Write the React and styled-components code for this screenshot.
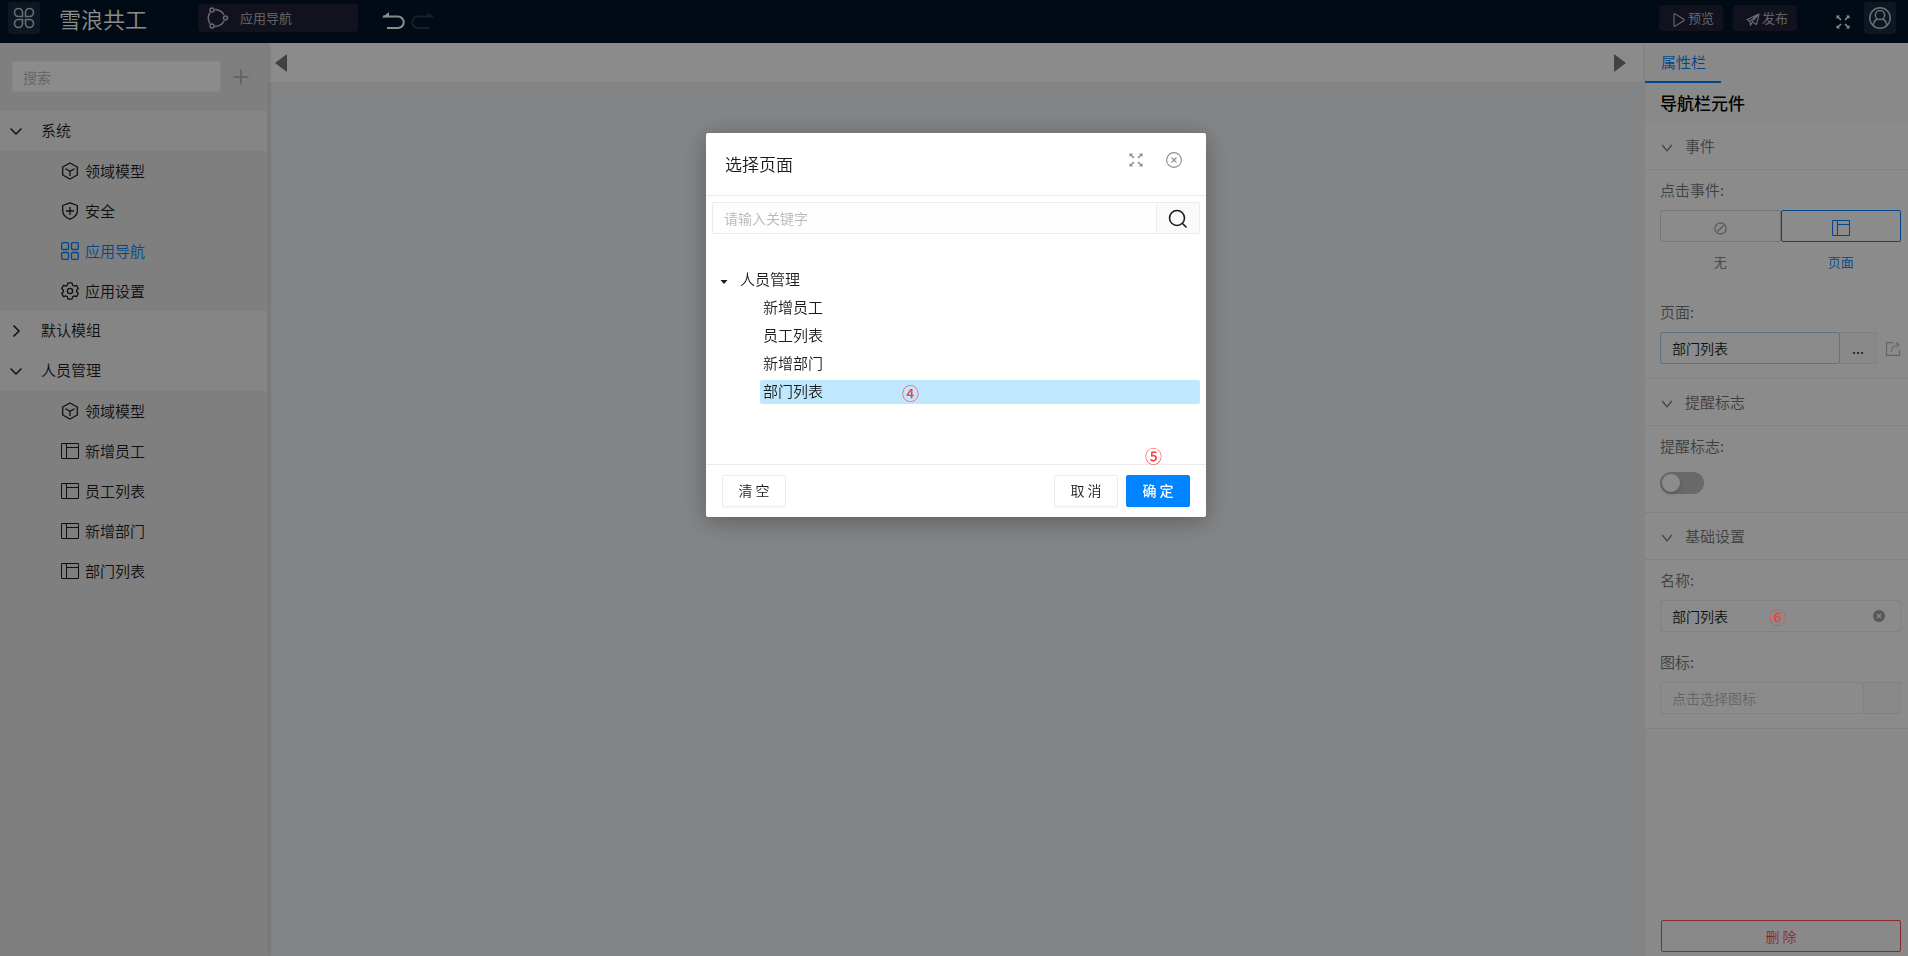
import React, { useState } from 'react';
import styled, { createGlobalStyle, css } from 'styled-components';

const GlobalStyle = createGlobalStyle`
    * {
        box-sizing: border-box;
    }
    body {
        margin: 0;
        font-family: "Noto Sans CJK SC", "Noto Sans", sans-serif;
        font-weight: 350;
        font-size: 15px;
        line-height: 22px;
        color: #1c1c1c;
    }
    button, input {
        font: inherit;
        color: inherit;
        margin: 0;
    }
    button {
        padding: 0;
        border: none;
        background: none;
        cursor: pointer;
    }
`;

const Page = styled.div`
    display: flex;
    flex-direction: column;
    min-height: 100vh;
`;

const TopBar = styled.header`
    display: flex;
    align-items: flex-start;
    height: 43px;
    padding: 0 12px 0 8px;
    background: #001529;
    color: #fff;
`;

const SquareButton = styled.button`
    display: flex;
    align-items: center;
    justify-content: center;
    width: 32px;
    height: 32px;
    margin-top: 2px;
    border-radius: 4px;
    background: #172b3e;
    color: #c4c8cd;
`;

const Brand = styled.h1`
    margin: 3px 0 0 19px;
    width: 139px;
    font-size: 22px;
    font-weight: 350;
    line-height: 30px;
`;

const NavPill = styled.button`
    display: flex;
    align-items: center;
    gap: 11px;
    width: 160px;
    height: 28px;
    margin-top: 4px;
    padding-left: 9px;
    border-radius: 4px;
    background: #212238;
    color: #c0c3c8;
    font-size: 13px;
`;

const HistoryGroup = styled.div`
    display: flex;
    gap: 6px;
    margin: 11px auto 0 23px;
`;

const HistoryButton = styled.button`
    display: flex;
    color: ${({ $off }) => ($off ? '#28384a' : '#fff')};
`;

const TopActions = styled.div`
    display: flex;
    gap: 10px;
`;

const TopAction = styled.button`
    display: flex;
    align-items: center;
    justify-content: center;
    gap: 2px;
    width: 64px;
    height: 26px;
    margin-top: 5px;
    padding-left: 4px;
    border-radius: 4px;
    background: #212238;
    color: #c0c3c8;
    font-size: 13px;
    svg {
        margin-top: 3px;
    }
`;

const ExpandButton = styled.button`
    display: flex;
    margin: 15px 14px 0 39px;
`;

const Workspace = styled.main`
    flex: 1;
    display: grid;
    grid-template-columns: 268px 1fr 263px;
    background: #eef0f3;
`;

const Sidebar = styled.aside`
    background: #e8e8e8;
    box-shadow: 1px 0 4px rgba(0, 0, 0, 0.18);
    z-index: 1;
`;

const SearchRow = styled.div`
    display: flex;
    align-items: center;
    gap: 12px;
    padding: 18px 0 19px 12px;
`;

const SideSearch = styled.input`
    width: 209px;
    height: 31px;
    padding: 0 10px;
    border: 1px solid #f4f4f4;
    border-radius: 2px;
    background: #fdfdfd;
    font-size: 14px;
    &::placeholder {
        color: #b4b4b4;
    }
`;

const PlainButton = styled.button`
    display: flex;
    color: ${({ $color }) => $color || 'inherit'};
`;

const GroupTitle = styled.button`
    display: flex;
    align-items: center;
    gap: 19px;
    width: 267px;
    height: 40px;
    padding: 0 0 2px 10px;
    background: #f2f2f2;
    svg {
        margin-top: 2px;
    }
`;

const MenuItem = styled.button`
    display: flex;
    align-items: center;
    gap: 6px;
    width: 267px;
    height: 40px;
    padding-left: 61px;
    color: ${({ $active }) => ($active ? '#0084ff' : 'inherit')};
`;

const Stage = styled.section`
    min-width: 0;
`;

const StageBar = styled.div`
    display: flex;
    align-items: center;
    justify-content: space-between;
    height: 39px;
    margin-right: 2px;
    padding: 0 17px 0 7px;
    background: #fdfdfd;
`;

const Panel = styled.aside`
    display: flex;
    flex-direction: column;
    background: #fafafa;
    color: #757575;
`;

const PanelTab = styled.button`
    align-self: flex-start;
    width: 76px;
    height: 40px;
    border-bottom: 2px solid #0084ff;
    color: #0084ff;
    padding-left: 1px;
`;

const PanelTitle = styled.h2`
    margin: 0;
    padding-left: 15px;
    color: #000;
    font-size: 17px;
    font-weight: 500;
    line-height: 40px;
`;

const Section = styled.section`
    background: #fefefe;
    border-bottom: 1px solid #ebebeb;
`;

const SectionHead = styled.button`
    display: flex;
    align-items: center;
    gap: 12px;
    width: 100%;
    height: 47px;
    padding-left: 16px;
    border-bottom: 1px solid #ebebeb;
    svg {
        margin-top: 4px;
    }
`;

const SectionBody = styled.div`
    display: flex;
    flex-direction: column;
    padding: 9px 7px 14px 15px;
`;

const Field = styled.div`
    display: flex;
    flex-direction: column;
    gap: 9px;
    margin-top: ${({ $top }) => $top || 0}px;
`;

const FieldRow = styled.div`
    display: flex;
    align-items: center;
`;

const TextField = styled.input`
    flex: 1;
    min-width: 0;
    height: 32px;
    padding: 0 11px;
    border: 1px solid ${({ $focused }) => ($focused ? '#a3d3ff' : '#ebebeb')};
    border-radius: 2px;
    background: #fefefe;
    color: #1c1c1c;
    font-size: 14px;
    &::placeholder {
        color: #b8b8b8;
    }
`;

const Addon = styled.button`
    width: 37px;
    height: 32px;
    border: 1px solid #ebebeb;
    border-left: none;
    background: #fafafa;
    color: #262626;
`;

const ShareButton = styled.button`
    display: flex;
    margin: 2px 1px 0 9px;
    color: #b5b5b5;
`;

const ClearWrap = styled.div`
    display: flex;
    align-items: center;
    height: 32px;
    padding-right: 15px;
    border: 1px solid #ebebeb;
    border-radius: 2px;
    ${TextField} {
        height: 30px;
        border: none;
    }
`;

const ChoiceGroup = styled.div`
    display: grid;
    grid-template-columns: 1fr 1fr;
`;

const HiddenRadio = styled.input`
    appearance: none;
    width: 0;
    height: 0;
`;

const ChoiceBox = styled.span`
    display: flex;
    align-items: center;
    justify-content: center;
    width: 100%;
    height: 32px;
    padding-top: 4px;
    border: 1px solid #d9d9d9;
    border-radius: 2px;
    color: #9a9a9a;
`;

const Choice = styled.label`
    display: flex;
    flex-direction: column;
    align-items: center;
    gap: 9px;
    font-size: 13px;
    ${({ $checked }) => $checked && css`
        color: #0084ff;
        ${ChoiceBox} {
            border-color: #0084ff;
            color: #0084ff;
        }
    `}
`;

const Switch = styled.input`
    appearance: none;
    display: flex;
    align-items: center;
    width: 44px;
    height: 22px;
    margin: 6px 0 4px;
    padding: 2px;
    border-radius: 11px;
    background: #bfbfbf;
    &::before {
        content: "";
        width: 18px;
        height: 18px;
        border-radius: 50%;
        background: #fff;
        box-shadow: 0 2px 4px rgba(0, 35, 11, 0.2);
    }
    &:checked {
        justify-content: flex-end;
        background: #0084ff;
    }
`;

const DeleteButton = styled.button`
    height: 32px;
    margin: auto 7px 4px 16px;
    border: 1px solid #ff4d4f;
    border-radius: 2px;
    color: #ff4d4f;
    font-size: 14px;
`;

const Mask = styled.div`
    position: fixed;
    inset: 0;
    z-index: 10;
    display: flex;
    align-items: flex-start;
    justify-content: center;
    padding: 133px 0 0 4px;
    background: rgba(0, 0, 0, 0.45);
`;

const Dialog = styled.div`
    position: relative;
    width: 500px;
    border-radius: 2px;
    background: #fff;
    box-shadow: 0 4px 24px rgba(0, 0, 0, 0.3);
`;

const DialogHead = styled.div`
    display: flex;
    align-items: center;
    height: 63px;
    padding: 0 24px 0 19px;
    border-bottom: 1px solid #ebebeb;
`;

const DialogTitle = styled.h3`
    flex: 1;
    margin: 0;
    font-size: 17px;
    font-weight: 350;
    line-height: 24px;
`;

const DialogTools = styled.div`
    display: flex;
    align-items: center;
    gap: 23px;
    padding-bottom: 9px;
    color: #8c8c8c;
`;

const KeywordRow = styled.div`
    display: flex;
    padding: 6px;
    ${TextField} {
        border-radius: 2px 0 0 2px;
    }
`;

const SearchButton = styled.button`
    display: flex;
    align-items: center;
    justify-content: center;
    width: 43px;
    border: 1px solid #ebebeb;
    border-left: none;
    border-radius: 0 2px 2px 0;
    background: #fafafa;
    svg {
        margin-top: 2px;
    }
`;

const Tree = styled.div`
    display: flex;
    flex-direction: column;
    gap: 4px;
    height: 224px;
    padding: 28px 6px 0 12px;
`;

const TreeRoot = styled.button`
    display: flex;
    align-items: center;
    gap: 10px;
    height: 24px;
    padding-bottom: 2px;
    svg {
        margin-top: 3px;
    }
`;

const TreeLeaf = styled.button`
    height: 24px;
    margin-left: 42px;
    padding: 0 0 2px 3px;
    border-radius: 2px;
    background: ${({ $selected }) => ($selected ? '#bfe8ff' : 'none')};
    text-align: left;
`;

const DialogFoot = styled.div`
    display: flex;
    gap: 8px;
    padding: 10px 16px;
    border-top: 1px solid #ebebeb;
`;

const DialogButton = styled.button`
    width: 64px;
    height: 32px;
    padding-bottom: 2px;
    border: 1px solid ${({ $primary }) => ($primary ? '#0084ff' : '#ebebeb')};
    border-radius: 2px;
    background: ${({ $primary }) => ($primary ? '#0084ff' : '#fff')};
    color: ${({ $primary }) => ($primary ? '#fff' : 'inherit')};
    font-size: 14px;
    font-weight: ${({ $primary }) => ($primary ? 500 : 350)};
    box-shadow: 0 2px 0 rgba(0, 0, 0, 0.02);
    &:first-child {
        margin-right: auto;
    }
`;

const StepMark = styled.span`
    position: absolute;
    left: ${({ $x }) => $x}px;
    top: ${({ $y }) => $y}px;
    color: #ff3838;
    font-size: 17px;
    font-weight: 500;
    line-height: 20px;
`;

const Icon = ({ size = 18, box = 18, width = 1.3, children }) => (
    <svg width={size} height={size} viewBox={`0 0 ${box} ${box}`} fill="none" stroke="currentColor" strokeWidth={width}>
        {children}
    </svg>
);

const CloverIcon = () => (
    <Icon size={22} box={22} width={1.6}>
        <path d="M9.5 9.5H5.5A4 4 0 1 1 9.500 5.500Z M12.500 9.500V5.500A4 4 0 1 1 16.500 9.500Z M9.500 12.500V16.500A4 4 0 1 1 5.500 12.500Z M12.500 12.500H16.500A4 4 0 1 1 12.500 16.500Z" />
    </Icon>
);

const OrbitIcon = () => (
    <Icon size={22} box={22} width={1.5}>
        <circle cx="5" cy="3" r="2" />
        <circle cx="5" cy="19" r="2" />
        <circle cx="18.500" cy="11" r="2" />
        <path d="M3 5.500Q-0.500 11 3 16.500M8 2.500Q14.500 3 17 8M8 19.500Q14.500 19 17 14" />
    </Icon>
);

const UndoIcon = ({ flip }) => (
    <svg width="24" height="18" viewBox="0 0 24 18" fill="none" stroke="currentColor" strokeWidth="2">
        <g transform={flip ? 'translate(24 0) scale(-1 1)' : undefined}>
            <path d="M2 5.500H17A5.500 5.500 0 0 1 17 17H6" />
            <path d="M1 6.500L8 1V6Z" fill="currentColor" stroke="none" />
        </g>
    </svg>
);

const PlayIcon = () => (
    <Icon size={14} box={14} width={1.1}>
        <path d="M2 1.500Q2 0.400 3 0.900L11.800 6.300Q12.600 7 11.800 7.700L3 13.100Q2 13.600 2 12.500Z" />
    </Icon>
);

const PlaneIcon = () => (
    <Icon size={14} box={14} width={1.1}>
        <path d="M1 6.500L13 1L10.500 11.500L6 9L4.500 12.500L3.800 8.200ZM3.800 8.200L13 1L6 9" strokeLinejoin="round" />
    </Icon>
);

const ExpandIcon = () => (
    <Icon size={14} box={14} width={1.5}>
        <path d="M1.500 1.500L5 5M12.500 1.500L9 5M1.500 12.500L5 9M12.500 12.500L9 9" />
        <path d="M0.500 0.500H4L0.500 4ZM13.500 0.500V4L10 0.500ZM0.500 13.500V10L4 13.500ZM13.500 13.500H10L13.500 10Z" fill="currentColor" stroke="none" />
    </Icon>
);

const UserIcon = () => (
    <Icon size={22} box={22} width={1.5}>
        <circle cx="11" cy="11" r="10.200" />
        <circle cx="11" cy="8" r="4.600" />
        <path d="M4 18.500Q5 13.500 8.500 12M18 18.500Q17 13.500 13.500 12" />
    </Icon>
);

const PlusIcon = () => (
    <Icon size={16} box={16} width={1.5}>
        <path d="M8 0.500V15.500M0.500 8H15.500" />
    </Icon>
);

const ChevronIcon = ({ right, width = 1.5 }) => (
    <Icon size={12} box={12} width={width}>
        <path d={right ? 'M3.500 0.500L9 6L3.500 11.500' : 'M0.500 3.500L6 9L11.500 3.500'} />
    </Icon>
);

const SmallChevronIcon = () => (
    <Icon size={12} box={12} width={1.2}>
        <path d="M1.200 3L6 8.800L10.800 3" />
    </Icon>
);

const CubeIcon = () => (
    <Icon>
        <path d="M9 1L16.300 5V13L9 17L1.700 13V5ZM4.500 6.700L9 9.300L13.500 6.700M9 9.300V14" strokeLinejoin="round" />
    </Icon>
);

const ShieldIcon = () => (
    <Icon>
        <path d="M9 0.900L16.300 3.500V9Q16.300 14.500 9 17.200Q1.700 14.500 1.700 9V3.500ZM9 5V13M5 9H13" strokeLinejoin="round" />
    </Icon>
);

const GridIcon = () => (
    <Icon>
        <rect x="0.700" y="0.700" width="6.800" height="6.800" rx="1" />
        <rect x="10.500" y="0.700" width="6.800" height="6.800" rx="1" />
        <rect x="0.700" y="10.500" width="6.800" height="6.800" rx="1" />
        <rect x="10.500" y="10.500" width="6.800" height="6.800" rx="1" />
    </Icon>
);

const GearIcon = () => (
    <Icon>
        <path d="M7 0.800H11L11.600 3.200L13.300 4.100L15.500 3.400L17.300 6.500L15.600 8.200V9.800L17.300 11.500L15.500 14.600L13.300 13.900L11.600 14.800L11 17.200H7L6.400 14.800L4.700 13.900L2.500 14.600L0.700 11.500L2.400 9.800V8.200L0.700 6.500L2.500 3.400L4.700 4.100L6.400 3.200Z" strokeLinejoin="round" />
        <circle cx="9" cy="9" r="2.600" />
    </Icon>
);

const LayoutIcon = () => (
    <Icon width={1}>
        <path d="M0.500 1.500H17.500V16.500H0.500ZM5.500 1.500V16.500M5.500 5.500H17.500" />
    </Icon>
);

const NoneIcon = () => (
    <Icon size={13} box={13} width={1.1}>
        <circle cx="6.500" cy="6.500" r="5.600" />
        <path d="M3.500 9.500L9.500 3.500" />
    </Icon>
);

const ShareIcon = () => (
    <Icon size={14} box={14} width={1.1}>
        <path d="M7 0.600H0.600V13.400H13.400V8M5 10.500Q5 4 12.500 2.800M10 0.500L13 2.800L10.500 5.500" />
    </Icon>
);

const ClearIcon = () => (
    <Icon size={12} box={12} width={1.1}>
        <circle cx="6" cy="6" r="6" fill="#a0a0a0" stroke="none" />
        <path d="M4 4L8 8M8 4L4 8" stroke="#fff" />
    </Icon>
);

const CloseIcon = () => (
    <Icon size={16} box={16} width={1.1}>
        <circle cx="8" cy="8" r="7.400" />
        <path d="M5.500 5.500L10.500 10.500M10.500 5.500L5.500 10.500" />
    </Icon>
);

const SearchIcon = () => (
    <Icon size={20} box={20} width={1.6}>
        <circle cx="9" cy="9" r="7.500" />
        <path d="M14 14L18.500 18.500" />
    </Icon>
);

const ArrowIcon = ({ right }) => (
    <svg width="12" height="18" viewBox="0 0 12 18" fill="currentColor">
        <path d={right ? 'M0 0L12 9L0 18Z' : 'M12 0L0 9L12 18Z'} />
    </svg>
);

const CaretIcon = () => (
    <svg width="12" height="8" viewBox="0 0 12 8" fill="currentColor">
        <path d="M2.500 3H9.500L6 7Z" />
    </svg>
);

const menuGroups = [
    {
        name: '系统',
        open: true,
        items: [
            { name: '领域模型', icon: <CubeIcon /> },
            { name: '安全', icon: <ShieldIcon /> },
            { name: '应用导航', icon: <GridIcon />, active: true },
            { name: '应用设置', icon: <GearIcon /> },
        ],
    },
    { name: '默认模组', open: false, items: [] },
    {
        name: '人员管理',
        open: true,
        items: [
            { name: '领域模型', icon: <CubeIcon /> },
            { name: '新增员工', icon: <LayoutIcon /> },
            { name: '员工列表', icon: <LayoutIcon /> },
            { name: '新增部门', icon: <LayoutIcon /> },
            { name: '部门列表', icon: <LayoutIcon /> },
        ],
    },
];

const pages = ['新增员工', '员工列表', '新增部门', '部门列表'];

const PanelSection = ({ title, children }) => (
    <Section>
        <SectionHead><SmallChevronIcon />{title}</SectionHead>
        <SectionBody>{children}</SectionBody>
    </Section>
);

const PropertyPanel = () => {
    const [action, setAction] = useState('page');
    const [pageName, setPageName] = useState('部门列表');
    const [label, setLabel] = useState('部门列表');

    return (
        <Panel>
            <PanelTab>属性栏</PanelTab>
            <PanelTitle>导航栏元件</PanelTitle>
            <PanelSection title="事件">
                <Field>
                    <span>点击事件:</span>
                    <ChoiceGroup>
                        <Choice $checked={action === 'none'}>
                            <ChoiceBox>
                                <HiddenRadio type="radio" name="action" checked={action === 'none'} onChange={() => setAction('none')} />
                                <NoneIcon />
                            </ChoiceBox>
                            无
                        </Choice>
                        <Choice $checked={action === 'page'}>
                            <ChoiceBox>
                                <HiddenRadio type="radio" name="action" checked={action === 'page'} onChange={() => setAction('page')} />
                                <LayoutIcon />
                            </ChoiceBox>
                            页面
                        </Choice>
                    </ChoiceGroup>
                </Field>
                <Field $top={28}>
                    <label htmlFor="page">页面:</label>
                    <FieldRow>
                        <TextField id="page" $focused value={pageName} onChange={(e) => setPageName(e.target.value)} />
                        <Addon>...</Addon>
                        <ShareButton aria-label="打开页面"><ShareIcon /></ShareButton>
                    </FieldRow>
                </Field>
            </PanelSection>
            <PanelSection title="提醒标志">
                <Field>
                    <label htmlFor="remind">提醒标志:</label>
                    <Switch id="remind" type="checkbox" />
                </Field>
            </PanelSection>
            <PanelSection title="基础设置">
                <Field>
                    <label htmlFor="label">名称:</label>
                    <ClearWrap>
                        <TextField id="label" value={label} onChange={(e) => setLabel(e.target.value)} />
                        <PlainButton aria-label="清除" onClick={() => setLabel('')}><ClearIcon /></PlainButton>
                    </ClearWrap>
                </Field>
                <Field $top={19}>
                    <label htmlFor="icon">图标:</label>
                    <FieldRow>
                        <TextField id="icon" placeholder="点击选择图标" />
                        <Addon aria-label="选择图标" />
                    </FieldRow>
                </Field>
            </PanelSection>
            <DeleteButton>删 除</DeleteButton>
        </Panel>
    );
};

const PageDialog = () => {
    const [keyword, setKeyword] = useState('');
    const [selected, setSelected] = useState('部门列表');

    return (
        <Dialog role="dialog" aria-label="选择页面">
            <DialogHead>
                <DialogTitle>选择页面</DialogTitle>
                <DialogTools>
                    <PlainButton aria-label="全屏"><ExpandIcon /></PlainButton>
                    <PlainButton aria-label="关闭"><CloseIcon /></PlainButton>
                </DialogTools>
            </DialogHead>
            <KeywordRow>
                <TextField aria-label="关键字" placeholder="请输入关键字" value={keyword} onChange={(e) => setKeyword(e.target.value)} />
                <SearchButton aria-label="搜索"><SearchIcon /></SearchButton>
            </KeywordRow>
            <Tree>
                <TreeRoot><CaretIcon />人员管理</TreeRoot>
                {pages.map((name) => (
                    <TreeLeaf key={name} $selected={name === selected} onClick={() => setSelected(name)}>{name}</TreeLeaf>
                ))}
            </Tree>
            <DialogFoot>
                <DialogButton>清 空</DialogButton>
                <DialogButton>取 消</DialogButton>
                <DialogButton $primary>确 定</DialogButton>
            </DialogFoot>
            <StepMark $x={196} $y={250}>④</StepMark>
            <StepMark $x={439} $y={313}>⑤</StepMark>
            <StepMark $x={1063} $y={474}>⑥</StepMark>
        </Dialog>
    );
};

export default function App() {
    return (
        <Page>
            <GlobalStyle />
            <TopBar>
                <SquareButton aria-label="应用"><CloverIcon /></SquareButton>
                <Brand>雪浪共工</Brand>
                <NavPill><OrbitIcon />应用导航</NavPill>
                <HistoryGroup>
                    <HistoryButton aria-label="撤销"><UndoIcon /></HistoryButton>
                    <HistoryButton $off aria-label="重做"><UndoIcon flip /></HistoryButton>
                </HistoryGroup>
                <TopActions>
                    <TopAction><PlayIcon />预览</TopAction>
                    <TopAction><PlaneIcon />发布</TopAction>
                </TopActions>
                <ExpandButton aria-label="全屏"><ExpandIcon /></ExpandButton>
                <SquareButton aria-label="用户"><UserIcon /></SquareButton>
            </TopBar>
            <Workspace>
                <Sidebar>
                    <SearchRow>
                        <SideSearch aria-label="搜索" placeholder="搜索" />
                        <PlainButton $color="#a6a8ab" aria-label="新增"><PlusIcon /></PlainButton>
                    </SearchRow>
                    {menuGroups.map((group) => (
                        <div key={group.name}>
                            <GroupTitle><ChevronIcon right={!group.open} />{group.name}</GroupTitle>
                            {group.items.map((item) => (
                                <MenuItem key={item.name} $active={item.active}>{item.icon}{item.name}</MenuItem>
                            ))}
                        </div>
                    ))}
                </Sidebar>
                <Stage>
                    <StageBar>
                        <PlainButton $color="#777" aria-label="向左"><ArrowIcon /></PlainButton>
                        <PlainButton $color="#777" aria-label="向右"><ArrowIcon right /></PlainButton>
                    </StageBar>
                </Stage>
                <PropertyPanel />
            </Workspace>
            <Mask>
                <PageDialog />
            </Mask>
        </Page>
    );
}
